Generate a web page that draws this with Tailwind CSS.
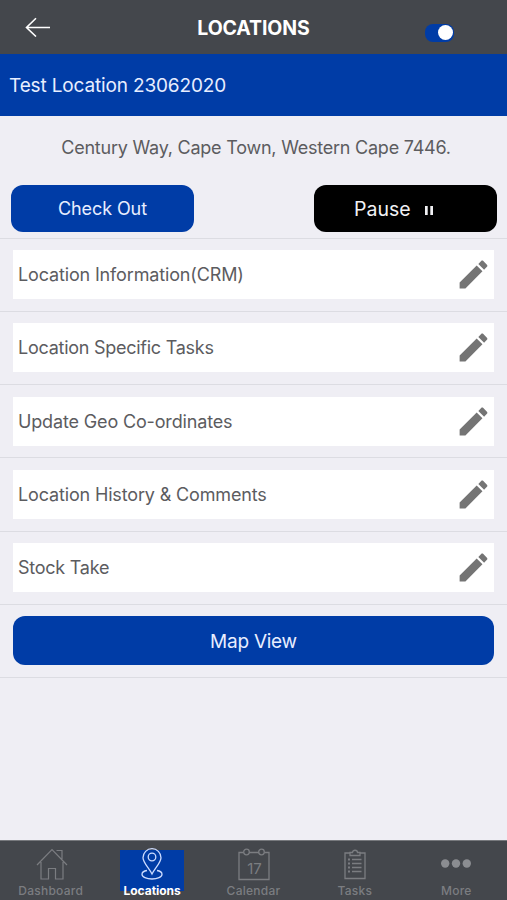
<!DOCTYPE html>
<html lang="en">
<head>
    <meta charset="UTF-8">
    <meta name="viewport" content="width=device-width, initial-scale=1.0">
    <title>Locations</title>
    <script src="https://cdn.jsdelivr.net/npm/@tailwindcss/browser@4"></script>
</head>
<body class="flex flex-col h-screen overflow-hidden bg-[#efeef4] font-[Inter,sans-serif] text-lg text-[#5c5c5f]">

    <!-- Top bar -->
    <header class="grid grid-cols-3 items-center h-[54px] shrink-0 bg-[#44474c] text-white">
        <button class="ml-[25px] w-[26px]" aria-label="Back">
            <svg class="block w-[26px] h-5" viewBox="0 0 26 20" fill="none" stroke="currentColor" stroke-width="1.6">
                <path d="M25 10.5H1.5M11 1.2L1.5 10.5L11 19.5"/>
            </svg>
        </button>
        <h1 class="text-center text-[19.5px] font-bold tracking-[-0.1px] pt-[3px]">LOCATIONS</h1>
        <div class="flex justify-end items-center w-[29px] h-[18px] mt-[11px] ml-[87px] pr-[1.5px] rounded-[8px] bg-[#003ca6]">
            <span class="size-[15px] rounded-full bg-white"></span>
        </div>
    </header>

    <h2 class="flex items-center h-[61.5px] shrink-0 pt-0.5 pl-[9px] bg-[#003ca6] text-[#e8eeff] text-[19px] tracking-[-0.15px]">Test Location 23062020</h2>

    <!-- Address and actions -->
    <section class="h-[122px] shrink-0 pt-[18px]">
        <p class="text-center pl-[5px] leading-7 tracking-[-0.23px]">Century Way, Cape Town, Western Cape 7446.</p>
        <div class="flex justify-between mt-[23.5px] pl-[11px] pr-2.5">
            <button class="w-[183px] h-[47px] pt-px rounded-xl bg-[#003ca6] text-[#e8eeff] tracking-[-0.1px]">Check Out</button>
            <button class="flex items-center pt-0.5 pl-10 w-[183px] h-[47px] rounded-xl bg-black text-[#f1f1f4] text-[19.5px]">
                Pause
                <svg class="ml-3.5 mt-0.5 w-2 h-[9px]" viewBox="0 0 8 9" fill="currentColor">
                    <path d="M0 0h2.7v9H0zM5.3 0H8v9H5.3z"/>
                </svg>
            </button>
        </div>
    </section>

    <!-- Menu rows -->
    <main class="flex-1 min-h-0 tracking-[-0.15px]">
        <div class="h-[73.3px] border-t border-[#dcdce2] pt-[11.5px] px-[13px]">
            <a class="flex items-center justify-between h-[49px] pl-[5px] pr-[2.5px] bg-white"><span class="pt-px">Location Information(CRM)</span>
                <svg class="size-[37px] text-[#747474]" viewBox="0 0 24 24" fill="currentColor"><path d="M3 17.25V21h3.75L17.81 9.94l-3.75-3.75L3 17.25zM20.71 7.04c.39-.39.39-1.02 0-1.41l-2.34-2.34c-.39-.39-1.02-.39-1.41 0l-1.83 1.83 3.75 3.75 1.83-1.83z"/></svg>
            </a>
        </div>
        <div class="h-[73.3px] border-t border-[#dcdce2] pt-[11.5px] px-[13px]">
            <a class="flex items-center justify-between h-[49px] pl-[5px] pr-[2.5px] bg-white"><span class="pt-px tracking-[-0.26px]">Location Specific Tasks</span>
                <svg class="size-[37px] text-[#747474]" viewBox="0 0 24 24" fill="currentColor"><path d="M3 17.25V21h3.75L17.81 9.94l-3.75-3.75L3 17.25zM20.71 7.04c.39-.39.39-1.02 0-1.41l-2.34-2.34c-.39-.39-1.02-.39-1.41 0l-1.83 1.83 3.75 3.75 1.83-1.83z"/></svg>
            </a>
        </div>
        <div class="h-[73.3px] border-t border-[#dcdce2] pt-[11.5px] px-[13px]">
            <a class="flex items-center justify-between h-[49px] pl-[5px] pr-[2.5px] bg-white"><span class="pt-px">Update Geo Co-ordinates</span>
                <svg class="size-[37px] text-[#747474]" viewBox="0 0 24 24" fill="currentColor"><path d="M3 17.25V21h3.75L17.81 9.94l-3.75-3.75L3 17.25zM20.71 7.04c.39-.39.39-1.02 0-1.41l-2.34-2.34c-.39-.39-1.02-.39-1.41 0l-1.83 1.83 3.75 3.75 1.83-1.83z"/></svg>
            </a>
        </div>
        <div class="h-[73.3px] border-t border-[#dcdce2] pt-[11.5px] px-[13px]">
            <a class="flex items-center justify-between h-[49px] pl-[5px] pr-[2.5px] bg-white"><span class="pt-px">Location History &amp; Comments</span>
                <svg class="size-[37px] text-[#747474]" viewBox="0 0 24 24" fill="currentColor"><path d="M3 17.25V21h3.75L17.81 9.94l-3.75-3.75L3 17.25zM20.71 7.04c.39-.39.39-1.02 0-1.41l-2.34-2.34c-.39-.39-1.02-.39-1.41 0l-1.83 1.83 3.75 3.75 1.83-1.83z"/></svg>
            </a>
        </div>
        <div class="h-[73.3px] border-t border-[#dcdce2] pt-[11.5px] px-[13px]">
            <a class="flex items-center justify-between h-[49px] pl-[5px] pr-[2.5px] bg-white"><span class="pt-px tracking-[-0.25px]">Stock Take</span>
                <svg class="size-[37px] text-[#747474]" viewBox="0 0 24 24" fill="currentColor"><path d="M3 17.25V21h3.75L17.81 9.94l-3.75-3.75L3 17.25zM20.71 7.04c.39-.39.39-1.02 0-1.41l-2.34-2.34c-.39-.39-1.02-.39-1.41 0l-1.83 1.83 3.75 3.75 1.83-1.83z"/></svg>
            </a>
        </div>
        <div class="h-[74.3px] border-y border-[#dcdce2] pt-[11.5px] px-[13px]">
            <button class="w-full h-[49px] pt-0.5 rounded-xl bg-[#003ca6] text-[#e8eeff] text-[19px] tracking-[-0.25px]">Map View</button>
        </div>
    </main>

    <!-- Tab bar -->
    <nav class="grid grid-cols-5 h-[60px] shrink-0 border-t border-[#77797d] bg-[#44474c] text-[#7b7d81] text-xs font-medium tracking-[0.25px]">
        <a class="flex flex-col items-center pt-[7px]">
            <svg class="w-8 h-[33px] ml-0.5" viewBox="0 0 32 33" fill="none" stroke="currentColor" stroke-width="1.2">
                <path d="M1 17L16 1.5L31 17M5 14v17h7.500V20.500h7V31H27V14M20.500 2.500H26V11"/>
            </svg>
            <span class="leading-4 mt-0.5">Dashboard</span>
        </a>
        <a class="flex flex-col items-center pt-[9px] text-white font-bold tracking-[-0.05px]">
            <span class="flex justify-center w-16 h-[41px] bg-[#003ca6]">
                <svg class="w-[22px] h-8 -mt-0.5 text-[#cddcff]" viewBox="0 0 22 32" fill="none" stroke="currentColor" stroke-width="1.3">
                    <path d="M11 26C8 20 2 14.500 2 9.700a9 9 0 0 1 18 0C20 14.500 14 20 11 26Z"/>
                    <circle cx="11" cy="9" r="3.800"/>
                    <path d="M6 22.500C3 23 1 24.500 1 26.300C1 29 5.500 31 11 31s10-2 10-4.700C21 24.500 19 23 16 22.500"/>
                </svg>
            </span>
            <span class="leading-4 -mt-2">Locations</span>
        </a>
        <a class="flex flex-col items-center pt-[7px]">
            <svg class="w-8 h-[33px] ml-px" viewBox="0 0 32 33" fill="none" stroke="currentColor" stroke-width="1.3">
                <path d="M5.500 4.500H1V31.500H31V4.500H26.500M11 4.500h10"/>
                <circle cx="8.500" cy="4" r="2.800"/><circle cx="23.500" cy="4" r="2.800"/>
                <text x="16.500" y="26" text-anchor="middle" font-size="15" font-weight="400" letter-spacing="0" fill="currentColor" stroke="none">17</text>
            </svg>
            <span class="leading-4 mt-0.5">Calendar</span>
        </a>
        <a class="flex flex-col items-center pt-[7px]">
            <svg class="w-[22px] h-[33px]" viewBox="0 0 22 33" fill="none" stroke="currentColor" stroke-width="1.3">
                <path d="M6 5H1V30.500H21V5H16M6 7.500V4.500H8.500C8.500 1.500 13.500 1.500 13.500 4.500H16V7.500ZM8 11.500h9.500M8 15.500h9.500M8 19.500h9.500M8 23.500h9.500"/>
                <path stroke-width="2" d="M4 11.500h2M4 15.500h2M4 19.500h2M4 23.500h2"/>
            </svg>
            <span class="leading-4 mt-0.5">Tasks</span>
        </a>
        <a class="flex flex-col items-center pt-[7px]">
            <svg class="w-[30px] h-[33px] text-[#8b8d91]" viewBox="0 0 30 33" fill="currentColor">
                <circle cx="4.200" cy="15.500" r="4.200"/><circle cx="15" cy="15.500" r="4.200"/><circle cx="25.800" cy="15.500" r="4.200"/>
            </svg>
            <span class="leading-4 mt-0.5">More</span>
        </a>
    </nav>
</body>
</html>
